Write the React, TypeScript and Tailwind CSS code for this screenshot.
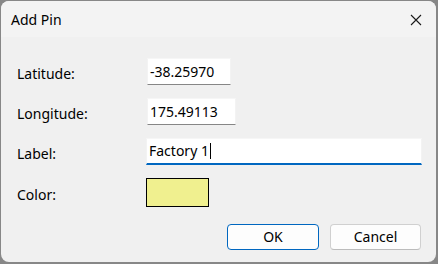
import React from 'react'

const font = { fontFamily: '"Noto Sans", "Open Sans", sans-serif' }

function Row({ label, children }: { label: string; children: React.ReactNode }) {
  return (
    <div className="flex h-[27px] items-start">
      <div className="w-[129px] pt-[4px] text-[14px] leading-[23px] text-black">{label}</div>
      {children}
    </div>
  )
}

function Field({ value, width }: { value: string; width: string }) {
  return (
    <div
      className={`ml-px h-[27px] ${width} border border-b-[#868686] border-t-[#f6f6f6] border-x-[#f3f3f3] bg-white pl-[2px] pt-[3px] text-[14px] leading-[20px] text-black`}
    >
      {value}
    </div>
  )
}

export default function App() {
  return (
    <div className="h-[264px] w-[438px] bg-[#878787] pl-px pt-px" style={font}>
      <div className="flex h-[261px] w-[435px] flex-col overflow-hidden rounded-[8px] bg-[#f0f0f0]">
        {/* Title bar */}
        <div className="flex h-[36px] shrink-0 items-center justify-between bg-[#f3f3f3] pl-[10px] pr-[14px]">
          <span className="pt-[1px] text-[14px] leading-[20px] text-black">Add Pin</span>
          <svg width="12" height="12" viewBox="0 0 12 12" className="mt-[1px]">
            <path d="M1 1L11 11M11 1L1 11" stroke="#1a1a1a" strokeWidth="1.1" fill="none" />
          </svg>
        </div>

        {/* Form */}
        <div className="flex flex-col gap-[13px] pl-[16px] pt-[21px]">
          <Row label="Latitude:">
            <Field value="-38.25970" width="w-[84px]" />
          </Row>
          <Row label="Longitude:">
            <Field value="175.49113" width="w-[89px]" />
          </Row>
          <Row label="Label:">
            <div className="h-[27px] w-[276px] border-x border-t border-x-[#f3f3f3] border-t-[#f6f6f6] border-b-2 border-b-[#0067c0] bg-white pl-[2px] pt-[1px] text-[14px] leading-[20px] text-black">
              Factory 1<span className="ml-px inline-block h-[16px] w-px translate-y-[3px] bg-black" />
            </div>
          </Row>
          <div className="flex h-[29px] items-start">
            <div className="w-[129px] pt-[5px] text-[14px] leading-[23px] text-black">Color:</div>
            <div className="h-[29px] w-[63px] border border-black bg-[#f0f08f]" />
          </div>
        </div>

        {/* Buttons */}
        <div className="mt-[17px] flex justify-end gap-[11px] pr-[15px]">
          <button className="h-[26px] w-[92px] rounded-[4px] border border-[#0067c0] bg-[#fdfdfd] text-[14px] leading-[20px] text-black">
            OK
          </button>
          <button className="h-[26px] w-[91px] rounded-[4px] border border-[#d0d0d0] border-b-[#bcbcbc] bg-[#fdfdfd] text-[14px] leading-[20px] text-black">
            Cancel
          </button>
        </div>
      </div>
    </div>
  )
}
